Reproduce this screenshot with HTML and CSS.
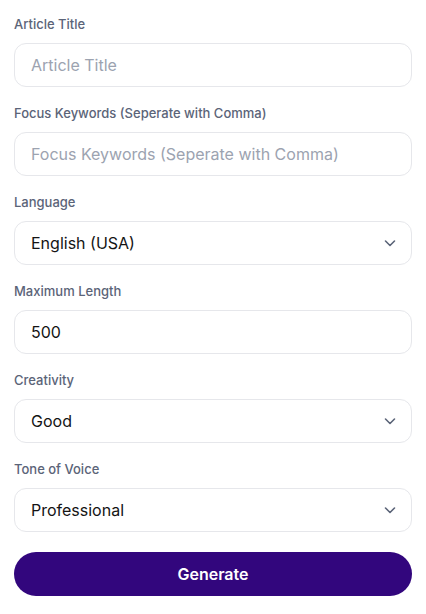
FILE: index.html
```html
<!DOCTYPE html>
<html lang="en">
<head>
<meta charset="utf-8">
<title>Article Generator</title>
<link rel="stylesheet" href="styles.css">
</head>
<body>
<form class="form">
  <div class="field">
    <label class="label" for="title">Article Title</label>
    <input class="control" id="title" type="text" placeholder="Article Title">
  </div>
  <div class="field">
    <label class="label" for="kw">Focus Keywords (Seperate with Comma)</label>
    <input class="control" id="kw" type="text" placeholder="Focus Keywords (Seperate with Comma)">
  </div>
  <div class="field">
    <label class="label" for="lang">Language</label>
    <div class="select">
      <span class="value">English (USA)</span>
      <svg class="chev" width="16" height="16" viewBox="0 0 16 16"><path d="M3.5 6l4.5 4.5L12.5 6" fill="none" stroke="currentColor" stroke-width="1.6" stroke-linecap="round" stroke-linejoin="round"/></svg>
    </div>
  </div>
  <div class="field">
    <label class="label" for="len">Maximum Length</label>
    <input class="control" id="len" type="text" value="500">
  </div>
  <div class="field">
    <label class="label">Creativity</label>
    <div class="select">
      <span class="value">Good</span>
      <svg class="chev" width="16" height="16" viewBox="0 0 16 16"><path d="M3.5 6l4.5 4.5L12.5 6" fill="none" stroke="currentColor" stroke-width="1.6" stroke-linecap="round" stroke-linejoin="round"/></svg>
    </div>
  </div>
  <div class="field">
    <label class="label">Tone of Voice</label>
    <div class="select">
      <span class="value">Professional</span>
      <svg class="chev" width="16" height="16" viewBox="0 0 16 16"><path d="M3.5 6l4.5 4.5L12.5 6" fill="none" stroke="currentColor" stroke-width="1.6" stroke-linecap="round" stroke-linejoin="round"/></svg>
    </div>
  </div>
  <button class="btn" type="button">Generate</button>
</form>
</body>
</html>
```
FILE: styles.css
```css
* { box-sizing: border-box; }
html, body { margin: 0; background: #fff; }
body {
  font-family: Inter, "Noto Sans", sans-serif;
  padding: 14px 14px 0 14px;
}
.form {
  display: flex;
  flex-direction: column;
  gap: 16px;
  width: 398px;
}
.field {
  display: flex;
  flex-direction: column;
  gap: 9px;
}
.label {
  font-size: 13px;
  line-height: 20px;
  font-weight: 500;
  color: #5b6478;
}
.control, .select {
  height: 44px;
  width: 100%;
  border: 1px solid #e6e7eb;
  border-radius: 12px;
  background: #fff;
  padding: 0 16px;
  font-family: Inter, "Noto Sans", sans-serif;
  font-size: 16px;
  color: #141414;
  outline: none;
}
.control::placeholder { color: #9ca3b0; }
.select {
  display: flex;
  align-items: center;
  justify-content: space-between;
  padding-right: 13px;
}
.chev { color: #5b6478; }
.btn {
  margin-top: 4px;
  height: 44px;
  width: 100%;
  border: 0;
  border-radius: 22px;
  background: #32067d;
  color: #fff;
  font-family: Inter, "Noto Sans", sans-serif;
  font-size: 16px;
  font-weight: 600;
}
```
